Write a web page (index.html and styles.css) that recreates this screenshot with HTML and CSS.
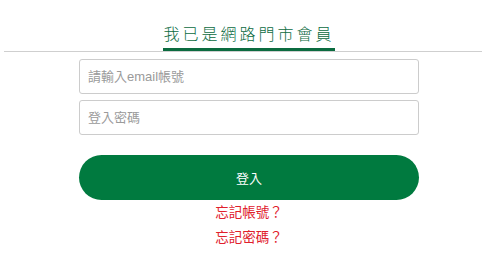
FILE: index.html
```html
<!DOCTYPE html>
<html lang="zh-Hant">
<head>
<meta charset="utf-8">
<title>登入</title>
<link rel="stylesheet" href="styles.css">
</head>
<body>
<div class="tabs">
  <div class="tabs-inner">
    <h2 class="tab-title">我已是網路門市會員</h2>
  </div>
</div>
<form class="login">
  <input class="field" type="text" placeholder="請輸入email帳號">
  <input class="field" type="password" placeholder="登入密碼">
  <button class="submit" type="button">登入</button>
  <div class="links">
    <a class="link" href="#">忘記帳號？</a>
    <a class="link" href="#">忘記密碼？</a>
  </div>
</form>
</body>
</html>
```
FILE: styles.css
```css
html, body {
  margin: 0;
  padding: 0;
  background: #fff;
}
body {
  font-family: "Liberation Sans", "Noto Sans CJK TC", sans-serif;
  width: 491px;
}
.tabs {
  margin: 0 9px 0 4px;
  border-bottom: 1px solid #cfcfcf;
}
.tabs-inner {
  width: 340px;
  margin-left: 75px;
  text-align: center;
}
.tab-title {
  display: inline-block;
  margin: 21px 0 0;
  padding: 0 0 3px 0;
  font-family: "Noto Sans CJK TC", sans-serif;
  font-size: 16px;
  line-height: 24px;
  font-weight: 300;
  letter-spacing: 3px;
  color: #0b6b3f;
  border-bottom: 3px solid #0b6b3f;
}
.login {
  width: 340px;
  margin: 7px 0 0 79px;
  display: flex;
  flex-direction: column;
}
.field {
  box-sizing: border-box;
  height: 35px;
  margin: 0 0 6px;
  padding: 0 8px;
  border: 1px solid #cccccc;
  border-radius: 3px;
  font-family: inherit;
  font-size: 13px;
  color: #333;
  outline: none;
}
.field::placeholder {
  color: #9a9a9a;
}
.submit {
  margin-top: 14px;
  height: 45px;
  border: none;
  border-radius: 23px;
  background: #007a3f;
  color: #fff;
  font-family: inherit;
  font-size: 13px;
  cursor: pointer;
}
.links {
  display: flex;
  flex-direction: column;
  align-items: center;
}
.link {
  font-size: 13.5px;
  line-height: 25px;
  color: #e0202c;
  text-decoration: none;
}
```
